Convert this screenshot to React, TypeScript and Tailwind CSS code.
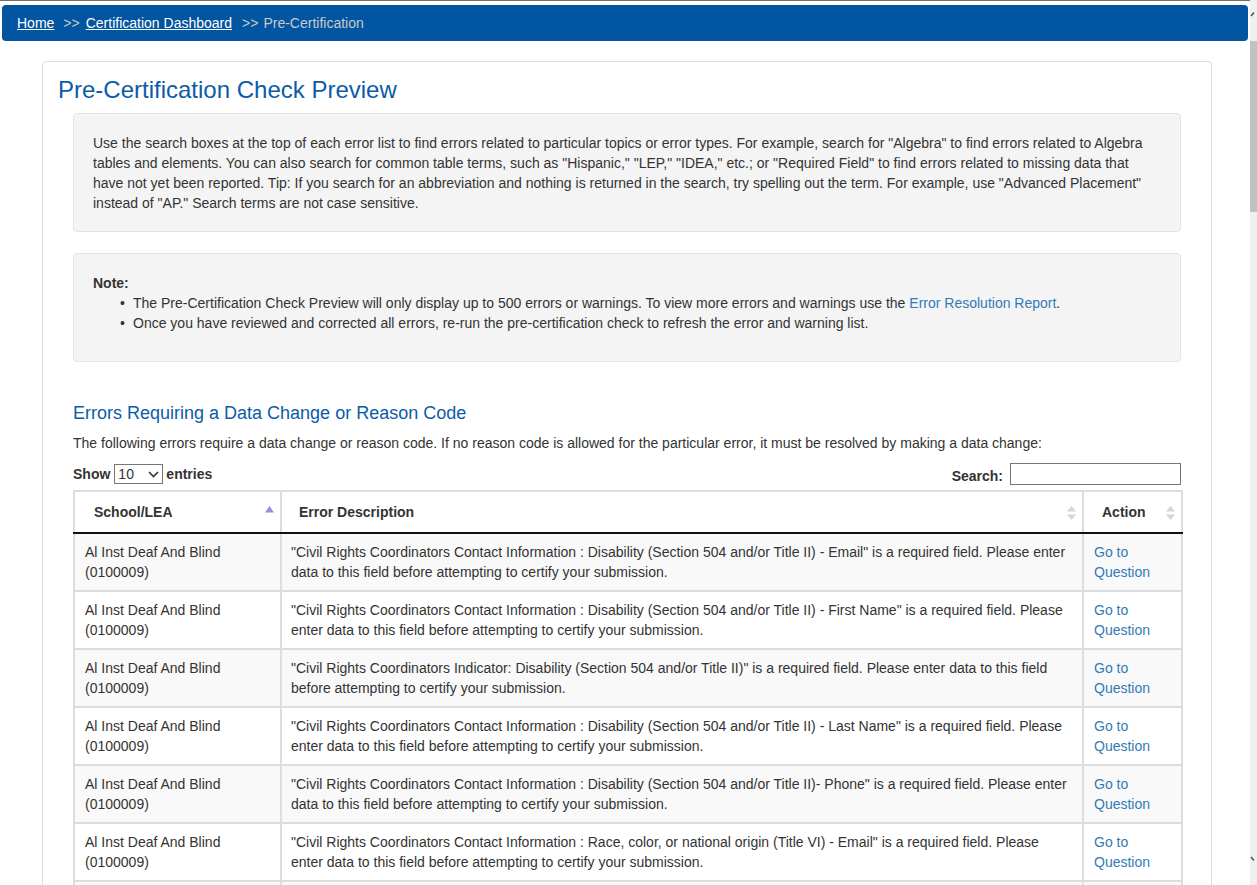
import React from 'react';

const rows = [
  '"Civil Rights Coordinators Contact Information : Disability (Section 504 and/or Title II) - Email" is a required field. Please enter data to this field before attempting to certify your submission.',
  '"Civil Rights Coordinators Contact Information : Disability (Section 504 and/or Title II) - First Name" is a required field. Please enter data to this field before attempting to certify your submission.',
  '"Civil Rights Coordinators Indicator: Disability (Section 504 and/or Title II)" is a required field. Please enter data to this field before attempting to certify your submission.',
  '"Civil Rights Coordinators Contact Information : Disability (Section 504 and/or Title II) - Last Name" is a required field. Please enter data to this field before attempting to certify your submission.',
  '"Civil Rights Coordinators Contact Information : Disability (Section 504 and/or Title II)- Phone" is a required field. Please enter data to this field before attempting to certify your submission.',
  '"Civil Rights Coordinators Contact Information : Race, color, or national origin (Title VI) - Email" is a required field. Please enter data to this field before attempting to certify your submission.',
  '"Civil Rights Coordinators Contact Information : Race, color, or national origin (Title VI) - First Name" is a required field. Please enter data to this field before attempting to certify your submission.',
];

const SortBoth = () => (
  <svg width="9" height="14" viewBox="0 0 9 14" className="absolute right-[6px] top-[14px]">
    <path d="M4.5 0 L9 5.5 L0 5.5 Z" fill="#d6d6d6" />
    <path d="M4.5 14 L9 8.5 L0 8.5 Z" fill="#d6d6d6" />
  </svg>
);

const SortAsc = () => (
  <svg width="9" height="7" viewBox="0 0 9 7" className="absolute right-[6px] top-[14px]">
    <path d="M4.5 0 L9 6.5 L0 6.5 Z" fill="#8f8fe2" />
  </svg>
);

export default function App() {
  return (
    <div className="flex h-[885px] w-full overflow-hidden bg-white text-[14px] text-[#333] font-['Liberation_Sans',Arial,sans-serif]">
      <div className="flex-1 min-w-0 overflow-hidden">
        <div className="h-px bg-[#707070]" />
        {/* Breadcrumb */}
        <div className="mx-[2px] mt-[4px] h-[36px] rounded-[4px] bg-[#0155a1] flex items-center px-[15px] text-[14px]">
          <a className="text-white underline">Home</a>
          <span className="ml-[9px] mr-[6px] text-[#c9c9c9]">&gt;&gt;</span>
          <a className="text-white underline">Certification Dashboard</a>
          <span className="ml-[10px] mr-[5px] text-[#c9c9c9]">&gt;&gt;</span>
          <span className="text-[#c9c9c9]">Pre-Certification</span>
        </div>

        {/* Card */}
        <div className="ml-[42px] mt-[20px] w-[1170px] rounded-[4px] border border-[#dddddd] pt-[14px] pb-10">
          <h1 className="px-[15px] text-[24px] leading-[28px] text-[#0b5ca8]">Pre-Certification Check Preview</h1>

          <div className="px-[30px]">
            <div className="mt-[9px] rounded-[4px] border border-[#e3e3e3] bg-[#f4f4f4] px-[19px] pt-[19px] pb-[18px] leading-[20px]">
              Use the search boxes at the top of each error list to find errors related to particular topics or error types. For example, search for "Algebra" to find errors related to Algebra tables and elements. You can also search for common table terms, such as "Hispanic," "LEP," "IDEA," etc.; or "Required Field" to find errors related to missing data that have not yet been reported. Tip: If you search for an abbreviation and nothing is returned in the search, try spelling out the term. For example, use "Advanced Placement" instead of "AP." Search terms are not case sensitive.
            </div>

            <div className="mt-[21px] rounded-[4px] border border-[#e3e3e3] bg-[#f4f4f4] px-[19px] pt-[19px] pb-[28px] leading-[20px]">
              <div className="font-bold">Note:</div>
              <ul className="pl-[40px]">
                <li className="relative">
                  <span className="absolute left-[-13px] top-0">•</span>
                  The Pre-Certification Check Preview will only display up to 500 errors or warnings. To view more errors and warnings use the{' '}
                  <a className="text-[#337ab7]">Error Resolution Report</a>.
                </li>
                <li className="relative">
                  <span className="absolute left-[-13px] top-0">•</span>
                  Once you have reviewed and corrected all errors, re-run the pre-certification check to refresh the error and warning list.
                </li>
              </ul>
            </div>

            <h2 className="mt-[41px] text-[18px] leading-[20px] text-[#0b5ca8]">Errors Requiring a Data Change or Reason Code</h2>
            <p className="mt-[10px] leading-[20px]">
              The following errors require a data change or reason code. If no reason code is allowed for the particular error, it must be resolved by making a data change:
            </p>

            <div className="mt-[10px] flex items-center justify-between h-[22px]">
              <div className="flex items-center font-bold">
                <span>Show</span>
                <div className="ml-[4px] mr-[3px] flex h-[20px] w-[49px] items-center justify-between border border-[#767676] bg-white px-[3px] font-normal">
                  <span>10</span>
                  <svg width="11" height="7" viewBox="0 0 11 7">
                    <path d="M1 1 L5.5 5.5 L10 1" fill="none" stroke="#333" strokeWidth="1.6" />
                  </svg>
                </div>
                <span>entries</span>
              </div>
              <div className="flex items-center font-bold">
                <span className="mr-[7px] mt-[4px]">Search:</span>
                <div className="h-[22px] w-[171px] border border-[#767676] bg-white" />
              </div>
            </div>

            <table className="mt-[5px] w-[1108px] border-collapse table-fixed">
              <colgroup>
                <col className="w-[207px]" />
                <col className="w-[802px]" />
                <col className="w-[99px]" />
              </colgroup>
              <thead>
                <tr className="h-[42px]">
                  <th className="relative border-2 border-[#dddddd] border-b-[#111] pl-[19px] text-left font-bold">
                    School/LEA
                    <SortAsc />
                  </th>
                  <th className="relative border-2 border-[#dddddd] border-b-[#111] pl-[17px] text-left font-bold">
                    Error Description
                    <SortBoth />
                  </th>
                  <th className="relative border-2 border-[#dddddd] border-b-[#111] pl-[18px] text-left font-bold">
                    Action
                    <SortBoth />
                  </th>
                </tr>
              </thead>
              <tbody>
                {rows.map((r, i) => (
                  <tr key={i} className={i % 2 === 0 ? 'bg-[#f9f9f9]' : 'bg-white'}>
                    <td className="border-2 border-[#dddddd] px-[10px] pt-[8px] pb-[8px] align-top leading-[20px]">
                      Al Inst Deaf And Blind (0100009)
                    </td>
                    <td className="border-2 border-[#dddddd] px-[9px] pt-[8px] pb-[8px] align-top leading-[20px]">{r}</td>
                    <td className="border-2 border-[#dddddd] px-[10px] pt-[8px] pb-[8px] align-top leading-[20px]">
                      <a className="text-[#337ab7]">Go to Question</a>
                    </td>
                  </tr>
                ))}
              </tbody>
            </table>
          </div>
        </div>
      </div>

      {/* Scrollbar */}
      <div className="relative w-[7px] shrink-0 bg-[#f0f0f0]">
        <svg width="7" height="6" viewBox="0 0 7 6" className="absolute left-0 top-[11px]">
          <path d="M1 5 L4 1.5" fill="none" stroke="#505050" strokeWidth="1.5" />
        </svg>
        <div className="absolute left-0 top-[41px] h-[171px] w-[7px] bg-[#c1c1c1]" />
        <svg width="7" height="6" viewBox="0 0 7 6" className="absolute left-0 top-[856px]">
          <path d="M1 1 L4 4.5" fill="none" stroke="#505050" strokeWidth="1.5" />
        </svg>
      </div>
    </div>
  );
}
